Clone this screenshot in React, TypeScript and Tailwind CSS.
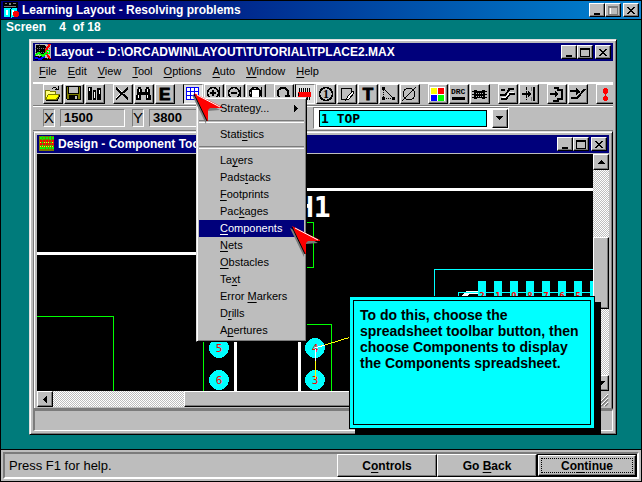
import { useState } from "react";
import type { ReactNode } from "react";

const raised =
  "bg-[#bdbdbd] border border-t-white border-l-white border-r-black border-b-black shadow-[inset_-1px_-1px_0_#7b7b7b]";

const dither =
  "bg-[repeating-conic-gradient(#ffffff_0_25%,#bdbdbd_0_50%)] bg-[length:2px_2px]";

// "&Tool" style labels, the letter after & is underlined
function Label({ text }: { text: string }) {
  const i = text.indexOf("&");
  if (i < 0) return <>{text}</>;
  return (
    <>
      {text.slice(0, i)}
      <span className="underline underline-offset-2">{text[i + 1]}</span>
      {text.slice(i + 2)}
    </>
  );
}

/* ---------- title bars ---------- */

function WindowButton({ kind, disabled }: { kind: "min" | "max" | "close"; disabled?: boolean }) {
  return (
    <button
      aria-label={kind}
      disabled={disabled}
      className={`flex h-[14px] w-4 items-center justify-center ${raised}`}
    >
      <svg width="12" height="11" shapeRendering="crispEdges">
        {kind === "min" && <rect x="3" y="8" width="6" height="2" fill="#000" />}
        {kind === "max" && (
          <>
            {disabled && <path d="M3.5 2.5h7v7h-7z" fill="none" stroke="#fff" />}
            <path d="M1.5 1.5h9v8h-9zM2 2.5h8" stroke={disabled ? "#7b7b7b" : "#000"} fill="none" />
          </>
        )}
        {kind === "close" && (
          <path
            d="M2 2h2v1h1v1h2v-1h1v-1h2v1h-1v1h-1v1h-1v1h1v1h1v1h1v1h-2v-1h-1v-1h-2v1h-1v1h-2v-1h1v-1h1v-1h1v-1h-1v-1h-1v-1h-1z"
            fill="#000"
          />
        )}
      </svg>
    </button>
  );
}

function TitleBar({
  icon,
  title,
  className,
  maxDisabled,
}: {
  icon: ReactNode;
  title: string;
  className: string;
  maxDisabled?: boolean;
}) {
  return (
    <div className={`flex h-[18px] shrink-0 items-center px-0.5 ${className}`}>
      {icon}
      <h2 className="ml-[3px] flex-1 truncate text-[12px] leading-4 font-bold text-white">{title}</h2>
      <WindowButton kind="min" />
      <WindowButton kind="max" disabled={maxDisabled} />
      <span className="ml-0.5 flex">
        <WindowButton kind="close" />
      </span>
    </div>
  );
}

const BookIcon = (
  <svg width="16" height="16" shapeRendering="crispEdges">
    <path d="M0 0h15v6H0z" fill="#000" />
    <path d="M2 1h2v1H2zM6 1h2v2H6zM10 1h3v1h-3zM1 4h12v1H1z" fill="#7b7b7b" />
    <path d="M1 6h6l1 1 1-1h5v9H9l-1 1-1-1H1z" fill="#00ffff" />
    <path d="M7 7h1v8H7z" fill="#000" />
    <path d="M3 8h2v5H3zM9 8h2v5H9z" fill="#fff" />
    <circle cx="13" cy="12" r="3" fill="#ff0000" />
  </svg>
);

const BoardIcon = (
  <svg width="16" height="16" shapeRendering="crispEdges">
    <path d="M0 0h16v16H0z" fill="#bdbdbd" />
    <path d="M1 1h9l3 4-1 4-5 2-3-3-3 1z" fill="#000" />
    <path d="M0 12h6l3 2h7v2H0z" fill="#000" />
    <path d="M0 4h16M0 8h16M4 0v16M12 0v16" stroke="#7b7b7b" strokeDasharray="1 1" />
    <path d="M0 14l6 1 4-3" stroke="#0000ff" strokeWidth="2" fill="none" />
    <path d="M0 11l4-2 4 3 3-3" stroke="#00ff00" strokeWidth="2" fill="none" />
    <path d="M15 0l-4 6 1 4 3 5" stroke="#ff0000" strokeWidth="2" fill="none" />
    <circle cx="13" cy="8" r="2" fill="none" stroke="#00ff00" />
  </svg>
);

const DesignIcon = (
  <svg width="16" height="16" shapeRendering="crispEdges">
    <path d="M0 0h15v15H0z" fill="#7b7b00" />
    <path d="M1 2h14M1 12h14" stroke="#00ff00" strokeWidth="2" strokeDasharray="2 1" />
    <path d="M1 5h14M1 8h14" stroke="#ff0000" strokeWidth="2" strokeDasharray="2 1" />
    <path d="M1 6.5h14M1 10.5h14" stroke="#ffff00" strokeDasharray="1 1" />
    <path d="M3.5 0v15M11.5 0v15" stroke="#00ff00" strokeDasharray="1 2" />
  </svg>
);

/* ---------- toolbar ---------- */

type Tool = { name: string; pressed?: boolean; icon: ReactNode };

const magnifier = (
  <>
    <circle cx="8" cy="8" r="5.5" fill="none" stroke="#000" strokeWidth="1.5" />
    <path d="M14.5 2v12" stroke="#000" />
  </>
);

const toolGroups: Tool[][] = [
  [
    {
      name: "Open",
      icon: (
        <>
          <path d="M1.5 13.5v-8h4l1 1h5v3" fill="#ffff7b" stroke="#7b7b00" />
          <path d="M1.5 14.5l3-5h11l-3 5z" fill="#ffff00" stroke="#7b7b00" />
          <path d="M2 15.5h11l3-5" fill="none" stroke="#000" />
          <path d="M8 3.5h1M9 2.5h3M12 3.5h1M14.5 1v4M11 4.5h4" fill="none" stroke="#000" />
        </>
      ),
    },
    {
      name: "Save",
      icon: (
        <>
          <path d="M1.5 1.5h14v13h-13l-1-1z" fill="#7b7b00" stroke="#000" />
          <path d="M4 2h9v6H4z" fill="#bdbdbd" />
          <path d="M3.5 2v6.5h10V2" fill="none" stroke="#000" />
          <path d="M4 10h9v5H4z" fill="#000" />
          <path d="M10 11h2v3h-2z" fill="#bdbdbd" />
        </>
      ),
    },
    {
      name: "Library",
      icon: (
        <>
          <path d="M2 2h4v13H2zM7 5h3v10H7zM11 3h4v12h-4z" fill="#000" />
          <path d="M3 3h1v3H3zM8 7h1v6H8zM13 5h1v4h-1z" fill="#fff" />
        </>
      ),
    },
  ],
  [
    {
      name: "Delete",
      icon: (
        <>
          <path d="M2 3l12 11M14 3L2 14" stroke="#000" strokeWidth="2" />
          <path d="M4 3l4 4M2 13l4-4" stroke="#fff" />
        </>
      ),
    },
    {
      name: "Find",
      icon: (
        <>
          <path d="M3 2h3v2h1v3h3V4h1V2h3v2h1v6h1v5h-5v-5H6v5H1v-5h1V4h1z" fill="#000" />
          <path d="M4 4h1v3H4zM12 4h1v3h-1zM3 10h1v3H3zM12 10h1v3h-1z" fill="#fff" />
        </>
      ),
    },
    {
      name: "Edit",
      icon: (
        <text x="3" y="15" fontSize="17" fontWeight="bold" stroke="#000">
          E
        </text>
      ),
    },
  ],
  [
    {
      name: "Spreadsheet",
      pressed: true,
      icon: (
        <>
          <path d="M2 2h12v12H2z" fill="#fff" />
          <path
            d="M2 2.5h13M2 6.5h13M2 10.5h13M2 14.5h13M2.5 2v13M6.5 2v13M10.5 2v13M14.5 2v13"
            stroke="#0000ff"
          />
        </>
      ),
    },
    {
      name: "Zoom in",
      icon: (
        <>
          {magnifier}
          <path d="M5 8h6M8 5v6" stroke="#000" strokeWidth="2" />
        </>
      ),
    },
    {
      name: "Zoom out",
      icon: (
        <>
          {magnifier}
          <path d="M5 8h6" stroke="#000" strokeWidth="2" />
        </>
      ),
    },
    {
      name: "Zoom all",
      icon: (
        <>
          {magnifier}
          <path d="M4 4h8v8H4z" fill="#fff" stroke="#000" />
          <path d="M2 12h2v2H2z" fill="#0000ff" />
        </>
      ),
    },
  ],
  [
    {
      name: "Query",
      icon: (
        <>
          <path d="M4 12a5.5 5.5 0 1 1 8 0" fill="none" stroke="#000" strokeWidth="2" />
          <path d="M10 10h5v3h-5z" fill="#000" />
        </>
      ),
    },
    {
      name: "Component",
      pressed: true,
      icon: (
        <>
          <path d="M3.5 3v12M5.5 3v12M7.5 3v12M9.5 3v12M11.5 3v12M13.5 3v12" stroke="#000" />
          <path d="M2 7h13v5H2z" fill="#ff0000" />
          <path d="M2 8h1v3H2z" fill="#000" />
        </>
      ),
    },
    {
      name: "Pin",
      icon: (
        <>
          <circle cx="9" cy="9" r="6.5" fill="none" stroke="#000" strokeWidth="1.5" />
          <text x="9" y="13" textAnchor="middle" fontSize="12" fontWeight="bold" fontFamily="Liberation Serif, serif">
            1
          </text>
        </>
      ),
    },
    {
      name: "Obstacle",
      icon: (
        <>
          <path d="M3.5 3.5h10v5l-5 6h-5z" fill="#bdbdbd" stroke="#000" />
          <path d="M15 6l-5 5-2 4 3-1 5-6z" fill="#fff" stroke="#000" />
        </>
      ),
    },
    {
      name: "Text",
      icon: (
        <text x="9" y="15" textAnchor="middle" fontSize="17" fontWeight="bold" stroke="#000">
          T
        </text>
      ),
    },
    {
      name: "Connection",
      icon: (
        <>
          <path d="M3.5 3v10h10" fill="none" stroke="#000" strokeDasharray="1 1" />
          <path d="M4 4l9 9" stroke="#000" />
          <path d="M2 2h3v3H2zM2 12h3v3H2zM12 12h3v3h-3z" fill="#000" />
        </>
      ),
    },
    {
      name: "Error",
      icon: (
        <>
          <circle cx="8" cy="9" r="6" fill="none" stroke="#000" />
          <path d="M15 2L1 16" stroke="#000" />
        </>
      ),
    },
  ],
  [
    {
      name: "Color",
      icon: (
        <>
          <path d="M1 2h15v14H1z" fill="#fff" />
          <path d="M2 3h6v6H2z" fill="#ffff00" />
          <path d="M9 3h6v6H9z" fill="#ff0000" />
          <path d="M2 10h6v6H2z" fill="#0000ff" />
          <path d="M9 10h6v6H9z" fill="#00ff00" />
        </>
      ),
    },
    {
      name: "Online DRC",
      icon: (
        <>
          <text x="1" y="9" fontSize="8" fontWeight="bold" fontFamily="Liberation Mono, monospace">
            DRC
          </text>
          <path d="M2 12h13v3H2z" fill="#000" />
        </>
      ),
    },
    {
      name: "Reconnect",
      icon: (
        <>
          <path d="M1 6.5h15M1 9.5h15M1 12.5h15" stroke="#000" />
          <path d="M3 5h3v1h5V5h3v9h-3v-1H6v1H3z" fill="#000" />
          <path d="M5 8h7M5 11h7" stroke="#bdbdbd" strokeDasharray="1 1" />
        </>
      ),
    },
  ],
  [
    {
      name: "Auto path",
      icon: (
        <>
          <path d="M2 5h4M1 10h5l4-5M9 4h6M2 14h5l4-5h5" fill="none" stroke="#000" strokeWidth="2" />
          <path d="M3 12h4l4-5h4" fill="none" stroke="#fff" />
        </>
      ),
    },
    {
      name: "Shove track",
      icon: (
        <>
          <path d="M6.5 2v13" stroke="#000" strokeDasharray="3 1" />
          <path d="M2 9h9" stroke="#000" strokeWidth="2" />
          <path d="M8 6l4 3-4 3zM13 2h2v14h-2z" fill="#000" />
          <path d="M11.5 2v4M11.5 12v4" stroke="#7b7b7b" />
        </>
      ),
    },
  ],
  [
    {
      name: "Edit segment",
      icon: (
        <>
          <path d="M6 3h4v2h4v9h-4v2H5" fill="none" stroke="#000" strokeWidth="1.5" />
          <path d="M2 9h7" stroke="#000" strokeWidth="2" />
          <path d="M7 6l4 3-4 3z" fill="#000" />
        </>
      ),
    },
    {
      name: "Add route",
      icon: (
        <>
          <path d="M1 6h7M2 13h6l8-9" fill="none" stroke="#000" strokeWidth="2" />
          <path d="M7 3l5 4-5 3z" fill="#000" />
        </>
      ),
    },
  ],
  [
    {
      name: "Refresh",
      icon: (
        <>
          <path d="M7 3h3v1h1v4h-1v1H7V8H6V4h1zM8 9h1v3H8z" fill="#ff0000" />
          <path d="M7 11h3v1h1v3h-1v1H7v-1H6v-3h1z" fill="#ff0000" />
        </>
      ),
    },
  ],
];

function Toolbar() {
  return (
    <div className="flex h-[21px] shrink-0 gap-2 overflow-hidden pl-[10px]">
      {toolGroups.map((group, i) => (
        <div key={i} className="flex shrink-0 gap-px">
          {group.map((tool) => (
            <button
              key={tool.name}
              aria-label={tool.name}
              className={`h-5 w-5 ${
                tool.pressed
                  ? "border border-t-[#7b7b7b] border-l-black border-r-white border-b-white bg-[#dedede]"
                  : raised
              }`}
            >
              <svg width="18" height="18" shapeRendering="crispEdges">
                {tool.icon}
              </svg>
            </button>
          ))}
        </div>
      ))}
    </div>
  );
}

/* ---------- coordinate row ---------- */

function Coordinate({ axis, value }: { axis: string; value: string }) {
  const sunken = "border border-t-[#7b7b7b] border-l-[#7b7b7b] border-r-white border-b-white";
  return (
    <div className="flex gap-[5px]">
      <label
        htmlFor={`coord-${axis}`}
        className={`flex h-[18px] w-3 items-center justify-center text-[15px] ${sunken}`}
      >
        {axis}
      </label>
      <input
        id={`coord-${axis}`}
        defaultValue={value}
        className={`h-[18px] w-[65px] px-[3px] text-[13px] font-bold outline-none ${sunken}`}
      />
    </div>
  );
}

function CoordinateRow() {
  return (
    <div className="flex h-[26px] shrink-0 items-center border-y border-t-[#7b7b7b] border-b-[#7b7b7b] pl-[10px] shadow-[inset_0_1px_0_#ffffff]">
      <div className="flex w-[270px] gap-[7px]">
        <Coordinate axis="X" value="1500" />
        <Coordinate axis="Y" value="3800" />
      </div>
      <div className="flex h-[22px] w-[196px] items-center border border-t-[#7b7b7b] border-l-[#7b7b7b] border-r-white border-b-white bg-white pl-[5px]">
        <select
          aria-label="Layer"
          className="h-[17px] flex-1 appearance-none border border-black bg-[#00ffff] pl-px font-['DejaVu_Sans_Mono',monospace] text-[13px] leading-[15px] font-bold outline-none"
        >
          <option>1 TOP</option>
        </select>
        <button
          aria-label="Show layers"
          className={`ml-[5px] flex h-[19px] w-4 items-center justify-center ${raised}`}
        >
          <svg width="8" height="4" shapeRendering="crispEdges">
            <path d="M0 0h7v1h-1v1h-1v1h-1v1h-1v-1h-1v-1h-1v-1h-1z" />
          </svg>
        </button>
      </div>
    </div>
  );
}

/* ---------- design canvas ---------- */

const pads = [
  { n: "5", x: 219, y: 348 },
  { n: "6", x: 219, y: 380 },
  { n: "4", x: 315, y: 348 },
  { n: "3", x: 315, y: 380 },
];

const pins = ["2", "1", "9", "8", "7", "6", "5"];

function Board() {
  return (
    <svg className="block min-h-0 w-full flex-1 bg-black" shapeRendering="crispEdges">
      <g transform="translate(-37 -154)">
        <path d="M37 252h165v3H37zM290 188h800v3H290z" fill="#fff" />
        <path d="M234 300h3v100h-3zM298 300h3v100h-3z" fill="#fff" />
        <text x="297" y="217" fontSize="28" fontWeight="bold" fontFamily="DejaVu Sans Mono, monospace" fill="#fff">
          H1
        </text>
        <g fill="none" stroke="#00ff00">
          <path d="M37 316.5h76.5V500" />
          <path d="M280 222.5h33.5v45H280" />
          <path d="M203.5 500V324.5h128V500" />
        </g>
        {pads.map((p) => (
          <g key={p.n}>
            <circle cx={p.x} cy={p.y} r="10" fill="#00ffff" />
            <text
              x={p.x}
              y={p.y + 4}
              textAnchor="middle"
              fontSize="11"
              fontFamily="DejaVu Sans Mono, monospace"
              fill="#ff0000"
            >
              {p.n}
            </text>
          </g>
        ))}
        <path d="M315.5 349v30M315 348l36-11" stroke="#ffff00" />
        <path d="M315 348l10-3M315.5 349v12" stroke="#fff" />
        <path d="M434.5 400V269.5H1000" fill="none" stroke="#00ffff" />
        <path d="M461 297l5-6h12v3h-9l-3 3z" fill="#fff" />
        {pins.map((n, i) => (
          <g key={n}>
            <rect x={478 + i * 16} y="281" width="8" height="30" fill="#00ffff" />
            <text
              x={482 + i * 16}
              y="299"
              textAnchor="middle"
              fontSize="9"
              fontWeight="bold"
              fontFamily="DejaVu Sans Mono, monospace"
              fill="#ff0000"
            >
              {n}
            </text>
          </g>
        ))}
        <rect x="590" y="281" width="8" height="30" fill="#00ffff" />
        <path d="M458.5 400V292.5H478M486 292.5h8M502 292.5h8M518 292.5h8M534 292.5h8M550 292.5h8M566 292.5h8M582 292.5h8" fill="none" stroke="#00ffff" />
      </g>
    </svg>
  );
}

function ScrollButton({ dir }: { dir: "up" | "down" | "left" | "right" }) {
  const arrows = {
    up: "M3 1h1v1h1v1h1v1h1v1H0V4h1V3h1V2h1z",
    down: "M0 1h7v1H6v1H5v1H4v1H3V4H2V3H1V2H0z",
    left: "M4 0h1v7H4V6H3V5H2V4H1V3h1V2h1V1h1z",
    right: "M2 0h1v1h1v1h1v1h1v1H5v1H4v1H3v1H2z",
  };
  return (
    <button aria-label={`Scroll ${dir}`} className={`flex size-4 shrink-0 items-center justify-center ${raised}`}>
      <svg width="7" height="7" shapeRendering="crispEdges">
        <path d={arrows[dir]} />
      </svg>
    </button>
  );
}

function DesignWindow() {
  return (
    <section className="flex min-h-0 flex-1 flex-col border border-t-[#dedede] border-l-[#7b7b7b] border-r-black border-b-[#7b7b7b] bg-[#bdbdbd] px-[3px] pt-[3px] pb-px shadow-[inset_1px_1px_0_#ffffff,inset_-1px_0_0_#7b7b7b]">
      <TitleBar icon={DesignIcon} title="Design - Component Tool" className="mb-px bg-[#00007b]" />
      <div className="flex min-h-0 flex-1">
        <div className="flex min-w-0 flex-1 flex-col">
          <Board />
          <div className={`flex h-4 shrink-0 ${dither}`}>
            <ScrollButton dir="left" />
            <div className="flex-1" />
            <div className={`flex-[2] ${raised}`} />
            <div className="flex-1" />
            <ScrollButton dir="right" />
          </div>
        </div>
        <div className="flex w-4 shrink-0 flex-col">
          <div className={`flex flex-1 flex-col ${dither}`}>
            <ScrollButton dir="up" />
            <div className="flex-1" />
            <div className={`h-[72px] ${raised}`} />
            <div className="flex-1" />
            <ScrollButton dir="down" />
          </div>
          <svg width="16" height="16" className="block" stroke="#7b7b7b" strokeWidth="2">
            <path d="M4 15L15 4M8 15l7-7M12 15l3-3" />
            <path d="M3 15L15 3M7 15l8-8M11 15l4-4" stroke="#fff" strokeWidth="1" />
          </svg>
        </div>
      </div>
    </section>
  );
}

/* ---------- overlays ---------- */

const menuItems = [
  "Strategy...",
  "-",
  "Stati&stics",
  "-",
  "La&yers",
  "Pads&tacks",
  "&Footprints",
  "Pac&kages",
  "&Components",
  "&Nets",
  "&Obstacles",
  "Te&xt",
  "Error &Markers",
  "D&rills",
  "A&pertures",
];

function SpreadsheetMenu() {
  const [active, setActive] = useState("&Components");

  return (
    <div
      role="menu"
      className="absolute top-[96px] left-[195px] flex w-[111px] flex-col border border-t-[#dedede] border-l-[#dedede] border-r-black border-b-black bg-[#bdbdbd] p-[2px] shadow-[inset_1px_1px_0_#ffffff,inset_-1px_-1px_0_#7b7b7b]"
    >
      {menuItems.map((item, i) =>
        item === "-" ? (
          <hr key={i} className="my-[3px] h-[3px] border-t border-b border-t-[#7b7b7b] border-b-white" />
        ) : (
          <button
            key={item}
            role="menuitem"
            onMouseEnter={() => setActive(item)}
            className={`flex h-[17px] items-center justify-between pr-[6px] pl-[21px] text-[11px] leading-[17px] whitespace-nowrap ${
              active === item ? "bg-[#00007b] text-white" : "text-black"
            }`}
          >
            <span>
              <Label text={item} />
            </span>
            {i === 0 && (
              <svg width="4" height="7" shapeRendering="crispEdges">
                <path d="M0 0h1v1h1v1h1v1h1v1h-1v1h-1v1h-1v1h-1z" />
              </svg>
            )}
          </button>
        )
      )}
    </div>
  );
}

function Pointer({ className }: { className: string }) {
  return (
    <svg width="32" height="32" className={`pointer-events-none absolute ${className}`}>
      <path d="M0 2l14 29 1-13 13-1z" fill="#7b7b7b" />
      <path d="M2 0l28 14v1H18l-2 2v11h-1z" fill="#ff0000" />
      <path d="M2 1l13 27" stroke="#000" />
      <path d="M5 2l23 12" stroke="#fff" />
    </svg>
  );
}

function Callout() {
  return (
    <div className="absolute top-[295px] left-[348px] w-[246px] border border-black bg-[#00ffff] p-[3px] shadow-[6px_6px_0_#000000]">
      <p className="min-h-[125px] border border-black px-[6px] py-[6px] text-[14px] leading-4 font-bold">
        To do this, choose the
        <br />
        spreadsheet toolbar button, then
        <br />
        choose Components to display
        <br />
        the Components spreadsheet.
      </p>
    </div>
  );
}

/* ---------- page ---------- */

const menus = ["&File", "&Edit", "&View", "&Tool", "&Options", "&Auto", "&Window", "&Help"];

function LayoutWindow() {
  return (
    <section className="mr-6 mb-[14px] ml-7 flex min-h-0 flex-1 flex-col border border-t-[#dedede] border-l-[#dedede] border-r-black border-b-black bg-[#bdbdbd] p-[3px] shadow-[inset_1px_1px_0_#ffffff,inset_-1px_-1px_0_#7b7b7b]">
      <TitleBar
        icon={BoardIcon}
        title="Layout -- D:\ORCADWIN\LAYOUT\TUTORIAL\TPLACE2.MAX"
        className="bg-[#00007b]"
      />
      <nav className="flex h-[21px] shrink-0 items-center gap-[11px] pl-[6px] text-[11px]">
        {menus.map((m) => (
          <button key={m}>
            <Label text={m} />
          </button>
        ))}
      </nav>
      <div className="h-0.5 shrink-0 bg-white" />
      <Toolbar />
      <CoordinateRow />
      <DesignWindow />
      <div className="h-[22px] shrink-0 border-t-2 border-r border-b border-l-2 border-t-[#7b7b7b] border-r-white border-b-white border-l-[#7b7b7b]" />
    </section>
  );
}

export default function App() {
  return (
    <div className="relative flex h-screen min-h-[482px] flex-col border border-black bg-[#007b7b] font-['Liberation_Sans',Arial,sans-serif] text-black">
      <TitleBar
        icon={BookIcon}
        title="Learning Layout - Resolving problems"
        className="bg-linear-to-r from-[#00007b] from-20% to-[#1084d0]"
        maxDisabled
      />
      <div className="h-px shrink-0 bg-black" />
      <p className="h-[19px] shrink-0 pl-[5px] text-[12px] leading-[14px] font-bold whitespace-pre text-white">
        Screen    4  of 18
      </p>
      <LayoutWindow />

      <footer className="shrink-0 border-t border-black bg-[#bdbdbd] p-[2px]">
        <div className="flex h-[27px] items-center border-2 border-t-[#7b7b7b] border-l-[#7b7b7b] border-r-white border-b-white">
          <p className="flex-1 pl-1 text-[13px]">Press F1 for help.</p>
          <button className={`h-[23px] w-[100px] text-[12px] font-bold ${raised}`}>
            <Label text="C&ontrols" />
          </button>
          <button className={`h-[23px] w-[100px] text-[12px] font-bold ${raised}`}>
            <Label text="Go &Back" />
          </button>
          <span className="border border-black">
            <button className={`flex h-[21px] w-[98px] p-[2px] text-[12px] font-bold ${raised}`}>
              <span className="flex flex-1 items-center justify-center self-stretch border border-dotted border-black">
                <span>
                  <Label text="Co&ntinue" />
                </span>
              </span>
            </button>
          </span>
        </div>
      </footer>

      <Callout />
      <SpreadsheetMenu />
      <Pointer className="top-[92px] left-[191px]" />
      <Pointer className="top-[225px] left-[289px]" />
    </div>
  );
}
